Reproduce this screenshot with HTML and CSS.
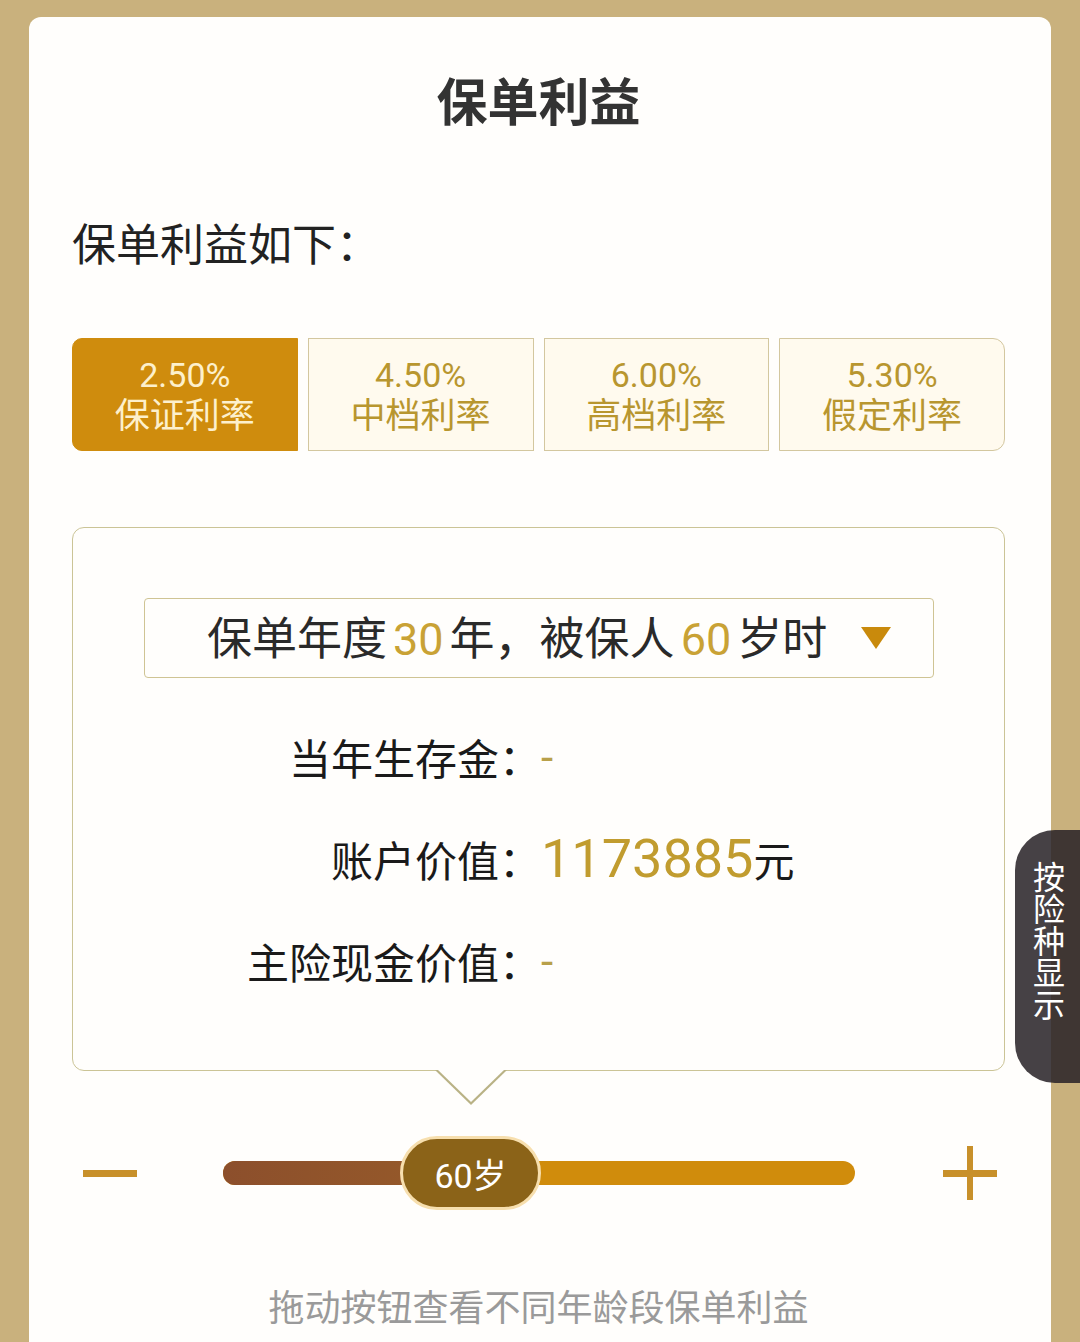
FILE: index.html
```html
<!DOCTYPE html>
<html lang="zh-CN">
<head>
<meta charset="utf-8">
<title>保单利益</title>
<link rel="stylesheet" href="styles.css">
</head>
<body>
<div class="card">
  <h1 class="title">保单利益</h1>
  <p class="subtitle">保单利益如下：</p>
  <div class="rates">
    <div class="rate active"><span>2.50%</span><span>保证利率</span></div>
    <div class="rate"><span>4.50%</span><span>中档利率</span></div>
    <div class="rate"><span>6.00%</span><span>高档利率</span></div>
    <div class="rate last"><span>5.30%</span><span>假定利率</span></div>
  </div>
  <div class="info">
    <div class="select">
      <span class="select-text">保单年度<em>30</em>年，被保人<em>60</em>岁时</span>
      <span class="caret"></span>
    </div>
    <div class="row"><span class="label">当年生存金：</span><span class="val dash">-</span></div>
    <div class="row"><span class="label">账户价值：</span><span class="val"><b class="num">1173885</b>元</span></div>
    <div class="row"><span class="label">主险现金价值：</span><span class="val dash">-</span></div>
  </div>
  <div class="slider">
    <span class="minus"></span>
    <div class="track">
      <div class="fill"></div>
      <div class="thumb">60岁</div>
    </div>
    <span class="plus"></span>
  </div>
  <p class="hint">拖动按钮查看不同年龄段保单利益</p>
  <div class="sidetab">按险种显示</div>
</div>
</body>
</html>
```

FILE: styles.css
```css
html, body {
  margin: 0;
  padding: 0;
}
body {
  background: #c9b17d;
  height: 1342px;
  overflow: hidden;
  font-family: "Roboto", "Noto Sans CJK SC", sans-serif;
  color: #1e1e1e;
}
.card {
  position: relative;
  margin: 17px 29px 0 29px;
  height: 1325px;
  background: #fffefc;
  border-radius: 12px 12px 0 0;
  padding: 0 46px 0 43px;
  box-sizing: border-box;
}
.title {
  margin: 0;
  padding-top: 52px;
  text-align: center;
  font-size: 51px;
  line-height: 60px;
  font-weight: 700;
  color: #333;
  font-family: "Noto Sans CJK SC", sans-serif;
}
.subtitle {
  margin: 88px 0 0 0;
  font-size: 44px;
  line-height: 50px;
  color: #222;
  font-family: "Noto Sans CJK SC", sans-serif;
}
.rates {
  display: flex;
  gap: 10px;
  margin-top: 71px;
}
.rate {
  flex: 1;
  height: 113px;
  box-sizing: border-box;
  border: 1.5px solid #d3c79f;
  background: #fffaee;
  color: #b8962f;
  display: flex;
  flex-direction: column;
  align-items: center;
  justify-content: center;
  padding-bottom: 2px;
  font-size: 35px;
  line-height: 37px;
  font-family: "Noto Sans CJK SC", sans-serif;
}
.rate span:first-child {
  font-family: "Roboto", sans-serif;
  font-size: 34px;
}
.rate.active {
  background: #cf8c0d;
  border-color: #cf8c0d;
  color: #fdf0cc;
  border-radius: 10px 0 0 10px;
}
.rate.last {
  border-radius: 0 12px 12px 0;
}
.info {
  position: relative;
  margin-top: 76px;
  height: 544px;
  box-sizing: border-box;
  border: 1.5px solid #cbc496;
  border-radius: 12px;
  padding: 70px 70px 0 71px;
}
.info::before,
.info::after {
  content: "";
  position: absolute;
  left: 362px;
  width: 0;
  height: 0;
  border-left: 36px solid transparent;
  border-right: 36px solid transparent;
}
.info::before {
  bottom: -35px;
  border-top: 35px solid #b9b285;
}
.info::after {
  bottom: -32px;
  border-top: 33px solid #fffefc;
  left: 364px;
  border-left-width: 34px;
  border-right-width: 34px;
}
.select {
  height: 80px;
  box-sizing: border-box;
  border: 1.5px solid #cfc494;
  border-radius: 4px;
  display: flex;
  align-items: center;
  padding-left: 62px;
  padding-bottom: 6px;
  font-size: 45px;
  color: #2a2a2a;
  font-family: "Noto Sans CJK SC", sans-serif;
}
.select em {
  font-style: normal;
  font-family: "Roboto", sans-serif;
  color: #c9a235;
  margin: 0 6px;
}
.caret {
  width: 0;
  height: 0;
  margin-left: 34px;
  margin-top: 6px;
  border-left: 15px solid transparent;
  border-right: 15px solid transparent;
  border-top: 22px solid #c98a0c;
}
.row {
  display: flex;
  align-items: center;
  height: 102px;
  margin-left: -71px;
}
.select + .row {
  margin-top: 27px;
}
.label {
  width: 468px;
  text-align: right;
  font-size: 42px;
  color: #1a1a1a;
  font-family: "Noto Sans CJK SC", sans-serif;
}
.val {
  margin-left: 0;
  font-size: 41px;
  color: #1a1a1a;
  font-family: "Noto Sans CJK SC", sans-serif;
}
.val.dash {
  font-family: "Roboto", sans-serif;
  font-size: 44px;
  color: #b8a04a;
  padding-top: 4px;
}
.num {
  font-weight: 400;
  font-family: "Roboto", sans-serif;
  font-size: 54px;
  color: #c19c2f;
}
.slider {
  display: flex;
  align-items: center;
  height: 76px;
  margin-top: 64px;
  padding-left: 11px;
}
.minus {
  width: 54px;
  height: 7px;
  background: #c8902a;
  margin-right: 86px;
}
.track {
  position: relative;
  width: 632px;
  height: 24px;
  border-radius: 12px;
  background: #d08c0c;
}
.fill {
  width: 250px;
  height: 100%;
  border-radius: 12px 0 0 12px;
  background: linear-gradient(to right, #8c4f2c, #975b29);
}
.thumb {
  position: absolute;
  left: 177px;
  top: 50%;
  transform: translateY(-50%);
  width: 141px;
  height: 74px;
  box-sizing: border-box;
  border: 3px solid #f7dfae;
  border-radius: 37px;
  background: #8b6318;
  color: #fff;
  font-size: 34px;
  display: flex;
  align-items: center;
  justify-content: center;
  font-family: "Roboto", "Noto Sans CJK SC", sans-serif;
}
.plus {
  position: relative;
  width: 54px;
  height: 54px;
  margin-left: 88px;
}
.plus::before,
.plus::after {
  content: "";
  position: absolute;
  background: #c8902a;
}
.plus::before {
  left: 0;
  right: 0;
  top: 24px;
  height: 7px;
}
.plus::after {
  top: 0;
  bottom: 0;
  left: 24px;
  width: 6px;
}
.hint {
  margin: 72px 0 0 0;
  text-align: center;
  font-size: 36px;
  line-height: 44px;
  color: #9a9a9a;
  font-family: "Noto Sans CJK SC", sans-serif;
}
.sidetab {
  position: absolute;
  right: -29px;
  top: 813px;
  width: 65px;
  height: 253px;
  box-sizing: border-box;
  padding-top: 31px;
  border-radius: 40px 0 0 40px;
  background: rgba(40, 34, 38, 0.86);
  color: #fff;
  font-size: 32px;
  line-height: 62px;
  writing-mode: vertical-rl;
  text-orientation: upright;
  font-family: "Noto Sans CJK SC", sans-serif;
}
```
